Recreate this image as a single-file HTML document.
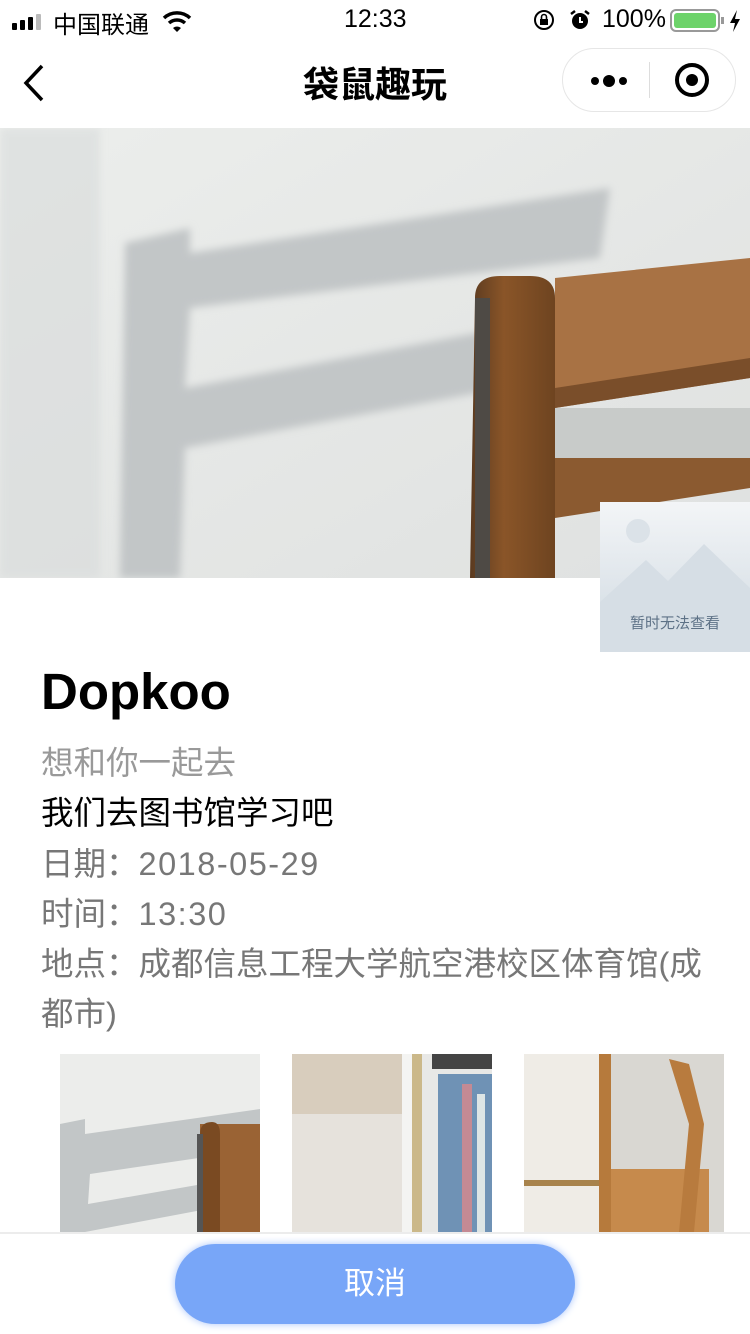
<!DOCTYPE html>
<html><head><meta charset="utf-8">
<style>
*{margin:0;padding:0;box-sizing:border-box}
body{width:750px;height:1334px;overflow:hidden;background:#fff;font-family:"Liberation Sans","Noto Sans CJK SC",sans-serif;position:relative}
.abs{position:absolute}
.t{position:absolute;left:41px;font-size:32.5px;white-space:nowrap}
.n{letter-spacing:1.5px}
</style></head><body>
<!-- status bar -->
<div class="abs" style="left:12px;top:14px;width:40px;height:16px">
<div class="abs" style="left:0;top:9px;width:5px;height:7px;background:#000;border-radius:1px"></div>
<div class="abs" style="left:8px;top:6px;width:5px;height:10px;background:#000;border-radius:1px"></div>
<div class="abs" style="left:16px;top:3px;width:5px;height:13px;background:#000;border-radius:1px"></div>
<div class="abs" style="left:24px;top:0;width:5px;height:16px;background:#bbb;border-radius:1px"></div>
</div>
<div class="abs" style="left:53px;top:5px;font-size:24px">中国联通</div>
<svg class="abs" style="left:162px;top:10px" width="30" height="22" viewBox="0 0 30 22"><path d="M2 8 A19 19 0 0 1 28 8" stroke="#000" stroke-width="3.5" fill="none"/><path d="M7 13 A12 12 0 0 1 23 13" stroke="#000" stroke-width="3.5" fill="none"/><path d="M11 18 L15 22 L19 18 A6 6 0 0 0 11 18Z" fill="#000"/></svg>
<div class="abs" style="left:344px;top:5px;font-size:25px">12:33</div>
<svg class="abs" style="left:533px;top:8px" width="24" height="24" viewBox="0 0 24 24"><circle cx="11" cy="12" r="9" stroke="#000" stroke-width="2" fill="none"/><rect x="7" y="11" width="8" height="6" fill="#000"/><path d="M8.5 11V9a2.5 2.5 0 0 1 5 0v2" stroke="#000" stroke-width="1.6" fill="none"/></svg>
<svg class="abs" style="left:568px;top:8px" width="24" height="24" viewBox="0 0 24 24"><circle cx="12" cy="13" r="8" fill="#000"/><path d="M12 9v5h3" stroke="#fff" stroke-width="2" fill="none"/><path d="M3 6l4-3M21 6l-4-3" stroke="#000" stroke-width="2.5"/></svg>
<div class="abs" style="left:602px;top:5px;font-size:25px">100%</div>
<div class="abs" style="left:670px;top:9px;width:50px;height:23px;border:2px solid #999;border-radius:6px;padding:2px"><div style="width:100%;height:100%;background:#6dd36a;border-radius:3px"></div></div>
<div class="abs" style="left:721px;top:17px;width:3px;height:7px;background:#999"></div>
<svg class="abs" style="left:729px;top:10px" width="12" height="22" viewBox="0 0 12 22"><path d="M8 0 L1 13 H6 L4 22 L11 9 H6Z" fill="#000"/></svg>
<!-- nav -->
<svg class="abs" style="left:20px;top:62px" width="28" height="42" viewBox="0 0 28 42"><path d="M22 4 L6 21 L22 38" stroke="#000" stroke-width="3.5" fill="none"/></svg>
<div class="abs" style="left:0;width:750px;top:56px;text-align:center;font-size:36px;font-weight:bold">袋鼠趣玩</div>
<div class="abs" style="left:562px;top:48px;width:174px;height:64px;border:1px solid #e6e6e6;border-radius:32px;background:#fff"></div>
<div class="abs" style="left:591px;top:77px;width:8px;height:8px;border-radius:50%;background:#000"></div>
<div class="abs" style="left:603px;top:75px;width:12px;height:12px;border-radius:50%;background:#000"></div>
<div class="abs" style="left:619px;top:77px;width:8px;height:8px;border-radius:50%;background:#000"></div>
<div class="abs" style="left:649px;top:62px;width:1px;height:36px;background:#ddd"></div>
<div class="abs" style="left:675px;top:63px;width:34px;height:34px;border-radius:50%;border:4px solid #000"></div>
<div class="abs" style="left:686px;top:74px;width:12px;height:12px;border-radius:50%;background:#000"></div>
<!-- hero -->
<svg class="abs" style="left:0;top:128px" width="750" height="450" viewBox="0 0 750 450">
<defs><linearGradient id="bg" x1="0" y1="0" x2="1" y2="1"><stop offset="0" stop-color="#eceeec"/><stop offset="1" stop-color="#dfe1e0"/></linearGradient>
<linearGradient id="wd" x1="0" y1="0" x2="1" y2="0"><stop offset="0" stop-color="#5a3a20"/><stop offset=".4" stop-color="#8a5528"/><stop offset="1" stop-color="#6e4420"/></linearGradient>
<filter id="bl"><feGaussianBlur stdDeviation="4"/></filter></defs>
<rect width="750" height="450" fill="url(#bg)"/>
<rect x="0" y="0" width="100" height="450" fill="#d8dbdb" opacity=".6" filter="url(#bl)"/>
<path d="M125 115 L190 100 L190 125 L610 60 L600 130 L190 180 L185 260 L610 180 L610 240 L185 320 L180 450 L120 450 Z" fill="#c2c6c7" filter="url(#bl)"/>
<path d="M555 150 L750 130 L750 250 L555 280Z" fill="#a87244"/>
<path d="M555 260 L750 230 L750 250 L555 280Z" fill="#7a4e2a"/>
<path d="M555 330 L750 300 L750 360 L555 390Z" fill="#8b5a30"/>
<rect x="555" y="280" width="195" height="50" fill="#c8cbc9"/>
<path d="M475 170 Q475 148 500 148 L530 148 Q555 148 555 170 L555 450 L470 450 Z" fill="url(#wd)"/>
<rect x="475" y="170" width="15" height="280" fill="#4e4a45"/>
</svg>
<!-- placeholder -->
<div class="abs" style="left:600px;top:502px;width:150px;height:150px;background:linear-gradient(#f3f5f7,#cfd9e1);overflow:hidden">
<div class="abs" style="left:26px;top:17px;width:24px;height:24px;border-radius:50%;background:#dbe2e8"></div>
<svg class="abs" style="left:0;top:40px" width="150" height="110"><path d="M0 60 L46 18 L68 39 L104 2 L150 46 L150 110 L0 110Z" fill="#d6dee5"/></svg>
<div class="abs" style="left:0;width:150px;top:110px;text-align:center;font-size:15px;color:#5d7186">暂时无法查看</div>
</div>
<!-- text -->
<div class="t" style="top:662px;font-size:51px;font-weight:bold">Dopkoo</div>
<div class="t" style="top:737px;color:#999">想和你一起去</div>
<div class="t" style="top:787px;color:#000">我们去图书馆学习吧</div>
<div class="t" style="top:838px;color:#777">日期：<span class="n">2018-05-29</span></div>
<div class="t" style="top:888px;color:#777">时间：<span class="n">13:30</span></div>
<div class="t" style="top:938px;color:#777">地点：成都信息工程大学航空港校区体育馆(成</div>
<div class="t" style="top:988px;color:#777">都市)</div>
<!-- thumbs -->
<svg class="abs" style="left:60px;top:1054px" width="200" height="178"><rect width="200" height="178" fill="#ecedeb"/><path d="M0 70 L25 65 L25 80 L200 55 L200 95 L30 120 L28 150 L200 120 L200 145 L25 178 L0 178Z" fill="#c2c6c7"/><rect x="140" y="70" width="60" height="108" fill="#9a6334"/><path d="M140 80 Q140 68 152 68 Q160 68 160 80 L160 178 L137 178Z" fill="#7a4a22"/><rect x="137" y="80" width="6" height="98" fill="#555"/></svg>
<svg class="abs" style="left:292px;top:1054px" width="200" height="178"><rect width="200" height="178" fill="#e6e2dc"/><rect x="0" y="0" width="110" height="60" fill="#d8cdbd"/><rect x="110" y="0" width="10" height="178" fill="#f4f4f2"/><rect x="120" y="0" width="10" height="178" fill="#cbb889"/><rect x="130" y="0" width="70" height="178" fill="#e8e8e6"/><rect x="146" y="20" width="54" height="158" fill="#6f92b5"/><rect x="170" y="30" width="10" height="148" fill="#c48a94"/><rect x="185" y="40" width="8" height="138" fill="#dde5e5"/><rect x="140" y="0" width="60" height="15" fill="#444"/></svg>
<svg class="abs" style="left:524px;top:1054px" width="200" height="178"><rect width="200" height="178" fill="#d9d7d2"/><rect x="0" y="0" width="75" height="178" fill="#efece6"/><rect x="0" y="126" width="75" height="6" fill="#a8834c"/><rect x="75" y="115" width="110" height="63" fill="#c68a4c"/><rect x="75" y="0" width="12" height="178" fill="#b67a3c"/><path d="M145 5 L165 10 L180 70 L170 178 L155 178 L165 70 Z" fill="#b87b3e"/></svg>
<!-- bottom -->
<div class="abs" style="left:0;top:1232px;width:750px;height:2px;background:#ececec"></div>
<div class="abs" style="left:175px;top:1244px;width:400px;height:80px;border-radius:40px;background:#78a6f8;box-shadow:0 0 8px #a8c4fa;color:#fff;font-size:31px;text-align:center;line-height:80px">取消</div>
</body></html>
